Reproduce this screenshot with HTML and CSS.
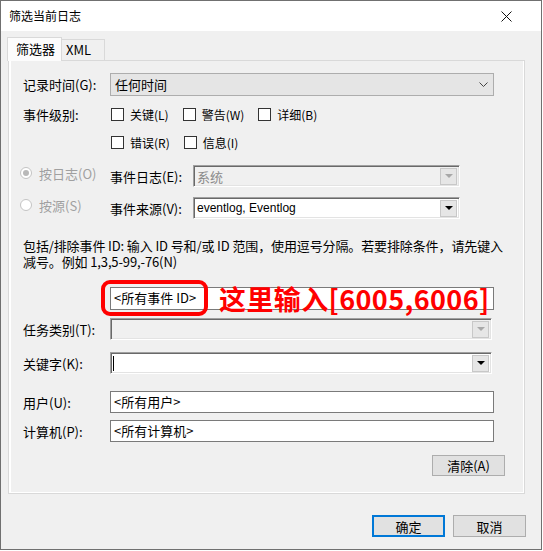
FILE: index.html
```html
<!DOCTYPE html>
<html lang="zh-CN">
<head>
    <meta charset="UTF-8">
    <title>筛选当前日志</title>
    <link rel="stylesheet" href="styles.css">
</head>
<body>

<div class="window">
    <div class="titlebar">
        <span class="title">筛选当前日志</span>
        <span class="close">
            <svg width="11" height="11" viewBox="0 0 11 11"><path d="M0.5 0.5 L10.5 10.5 M10.5 0.5 L0.5 10.5" stroke="#111" stroke-width="1" fill="none"/></svg>
        </span>
    </div>

    <div class="dialog">
        <div class="tabs">
            <div class="tab active">筛选器</div>
            <div class="tab">XML</div>
        </div>

        <div class="panel">
            <div class="row r-time">
                <span class="lbl">记录时间(G):</span>
                <div class="select">
                    <span>任何时间</span>
                    <svg class="chev" width="9" height="5" viewBox="0 0 9 5"><path d="M0.5 0.5 L4.5 4.5 L8.5 0.5" stroke="#444" fill="none"/></svg>
                </div>
            </div>

            <div class="row r-level">
                <span class="lbl">事件级别:</span>
                <div class="checks">
                    <span class="check"><i></i>关键(L)</span>
                    <span class="check"><i></i>警告(W)</span>
                    <span class="check"><i></i>详细(B)</span>
                </div>
            </div>
            <div class="row r-level2">
                <span class="lbl"></span>
                <div class="checks">
                    <span class="check"><i></i>错误(R)</span>
                    <span class="check"><i></i>信息(I)</span>
                </div>
            </div>

            <div class="row r-log">
                <span class="radio on"><i></i>按日志(O)</span>
                <span class="lbl2">事件日志(E):</span>
                <div class="combo short off">
                    <span class="cjk">系统</span>
                    <span class="drop"><b></b></span>
                </div>
            </div>
            <div class="row r-src">
                <span class="radio"><i></i>按源(S)</span>
                <span class="lbl2">事件来源(V):</span>
                <div class="combo short">
                    <span>eventlog, Eventlog</span>
                    <span class="drop"><b></b></span>
                </div>
            </div>

            <div class="desc">
                <div>包括/排除事件 ID: 输入 ID 号和/或 ID 范围，使用逗号分隔。若要排除条件，请先键入</div>
                <div>减号。例如 1,3,5-99,-76(N)</div>
            </div>

            <div class="row r-id">
                <span class="lbl"></span>
                <div class="textbox">&lt;所有事件 ID&gt;</div>
                <span class="mark"></span>
                <span class="note">这里输入[6005,6006]</span>
            </div>

            <div class="row r-task">
                <span class="lbl">任务类别(T):</span>
                <div class="combo wide off">
                    <span></span>
                    <span class="drop"><b></b></span>
                </div>
            </div>
            <div class="row r-key">
                <span class="lbl">关键字(K):</span>
                <div class="combo wide">
                    <span class="caret"></span>
                    <span class="drop"><b></b></span>
                </div>
            </div>

            <div class="row r-user">
                <span class="lbl">用户(U):</span>
                <div class="textbox">&lt;所有用户&gt;</div>
            </div>
            <div class="row r-pc">
                <span class="lbl">计算机(P):</span>
                <div class="textbox">&lt;所有计算机&gt;</div>
            </div>

            <div class="row r-clear">
                <button class="btn">清除(A)</button>
            </div>
        </div>

        <div class="actions">
            <button class="btn default">确定</button>
            <button class="btn">取消</button>
        </div>
    </div>
</div>

</body>
</html>
```

FILE: styles.css
```css
body {
    margin: 0;
    background: #fff;
    font-family: 'Noto Sans CJK SC', 'Microsoft YaHei', sans-serif;
    font-size: 13px;
    color: #000;
}
.window {
    width: 542px;
    height: 550px;
    box-sizing: border-box;
    border: 1px solid #707070;
    background: #f0f0f0;
    display: flex;
    flex-direction: column;
}
.titlebar {
    height: 30px;
    background: #fff;
    display: flex;
    align-items: center;
    justify-content: space-between;
    padding-left: 8px;
}
.title {
    font-size: 12px;
    line-height: 16px;
}
.close {
    width: 40px;
    display: flex;
    justify-content: flex-start;
    padding-top: 1px;
}
.dialog {
    flex: 1;
    padding: 6px 15px 0 7px;
}
.tabs {
    display: flex;
    align-items: flex-end;
    height: 23px;
}
.tab {
    box-sizing: border-box;
    height: 21px;
    border: 1px solid #d9d9d9;
    border-bottom: none;
    line-height: 20px;
    padding-left: 4px;
    width: 45px;
    margin-left: -1px;
}
.tab.active {
    height: 24px;
    width: 55px;
    margin-left: -1px;
    margin-bottom: -1px;
    padding-left: 8px;
    background: #fcfcfc;
    position: relative;
    z-index: 1;
    line-height: 22px;
}
.tab.active + .tab {
    margin-left: -1px;
    border-left: none;
    width: 44px;
    padding-left: 5px;
}
.panel {
    width: 517px;
    height: 434px;
    box-sizing: border-box;
    border: 1px solid #d9d9d9;
    box-shadow: inset 2px -1px 0 #fff, inset -1px 0 0 #fff;
    padding: 12px 0 0 14px;
}
.row {
    display: flex;
    align-items: center;
    position: relative;
}
.lbl {
    width: 87px;
    flex: none;
}
.select {
    box-sizing: border-box;
    width: 384px;
    height: 23px;
    background: #e5e5e5;
    border: 1px solid #adadad;
    display: flex;
    align-items: center;
    justify-content: space-between;
    padding: 0 5px 0 4px;
}
.r-level {
    margin-top: 4px;
    height: 28px;
}
.r-level2 {
    height: 29px;
}
.checks {
    display: flex;
    gap: 14px;
    padding-left: 1px;
    font-size: 12px;
}
.check {
    display: flex;
    align-items: center;
    gap: 6px;
}
.check i {
    width: 13px;
    height: 13px;
    box-sizing: border-box;
    border: 1px solid #333;
    background: #fff;
}
.r-log {
    margin-top: 8px;
}
.r-src {
    margin-top: 10px;
}
.radio {
    width: 90px;
    margin-left: -3px;
    display: flex;
    align-items: center;
    gap: 7px;
    color: #a0a0a0;
    position: relative;
    top: -3px;
}
.radio i {
    width: 12px;
    height: 12px;
    box-sizing: border-box;
    border: 1px solid #c4c4c4;
    border-radius: 50%;
    background: #fff;
    display: flex;
    align-items: center;
    justify-content: center;
}
.radio.on i::after {
    content: "";
    width: 6px;
    height: 6px;
    border-radius: 50%;
    background: #b9b9b9;
}
.lbl2 {
    width: 83px;
    flex: none;
}
.combo {
    box-sizing: border-box;
    height: 22px;
    background: #fff;
    border: 1px solid;
    border-color: #a0a0a0 #fff #fff #a0a0a0;
    box-shadow: inset 1px 1px 0 #696969, inset -1px -1px 0 #e3e3e3;
    display: flex;
    align-items: center;
    justify-content: space-between;
    padding: 0 2px 0 3px;
    font-family: 'Liberation Sans', 'Noto Sans CJK SC', sans-serif;
    font-size: 12px;
}
.combo .cjk {
    font-size: 13px;
}
.combo.short {
    width: 267px;
}
.combo.wide {
    width: 382px;
}
.combo.off {
    background: #f0f0f0;
    color: #8a8a8a;
}
.drop {
    width: 17px;
    height: 17px;
    box-sizing: border-box;
    border: 1px solid #c8c8c8;
    background: #e6e6e6;
    display: flex;
    align-items: center;
    justify-content: center;
}
.drop b {
    width: 0;
    height: 0;
    border-left: 4px solid transparent;
    border-right: 4px solid transparent;
    border-top: 4px solid #000;
}
.combo.off .drop b {
    border-top-color: #a8a8a8;
}
.caret {
    width: 1px;
    height: 15px;
    background: #000;
    margin-left: -1px;
}
.desc {
    margin-top: 19px;
    line-height: 16px;
    letter-spacing: -0.12px;
}
.textbox {
    box-sizing: border-box;
    width: 384px;
    height: 23px;
    background: #fff;
    border: 1px solid #7a7a7a;
    padding-left: 3px;
    line-height: 20px;
}
.r-id {
    margin-top: 17px;
}
.mark {
    position: absolute;
    left: 78px;
    top: -7px;
    width: 107px;
    height: 36px;
    box-sizing: border-box;
    border: 4px solid #f00;
    border-radius: 9px;
}
.note {
    position: absolute;
    left: 196px;
    top: -3px;
    font-size: 27px;
    line-height: 29px;
    font-weight: bold;
    color: #f00;
    letter-spacing: 0.4px;
}
.r-task {
    margin-top: 8px;
}
.r-key {
    margin-top: 12px;
}
.r-user {
    margin-top: 17px;
}
.r-user .textbox, .r-pc .textbox {
    height: 22px;
}
.r-pc {
    margin-top: 7px;
}
.r-clear {
    margin-top: 13px;
    justify-content: flex-end;
    padding-right: 19px;
}
.btn {
    box-sizing: border-box;
    width: 73px;
    height: 21px;
    background: #e1e1e1;
    border: 1px solid #adadad;
    font-family: inherit;
    font-size: 13px;
    line-height: 17px;
    padding: 0;
    color: #000;
}
.actions {
    display: flex;
    justify-content: flex-end;
    gap: 8px;
    margin-top: 21px;
}
.actions .btn {
    height: 22px;
}
.btn.default {
    border: 2px solid #0078d7;
}
```
